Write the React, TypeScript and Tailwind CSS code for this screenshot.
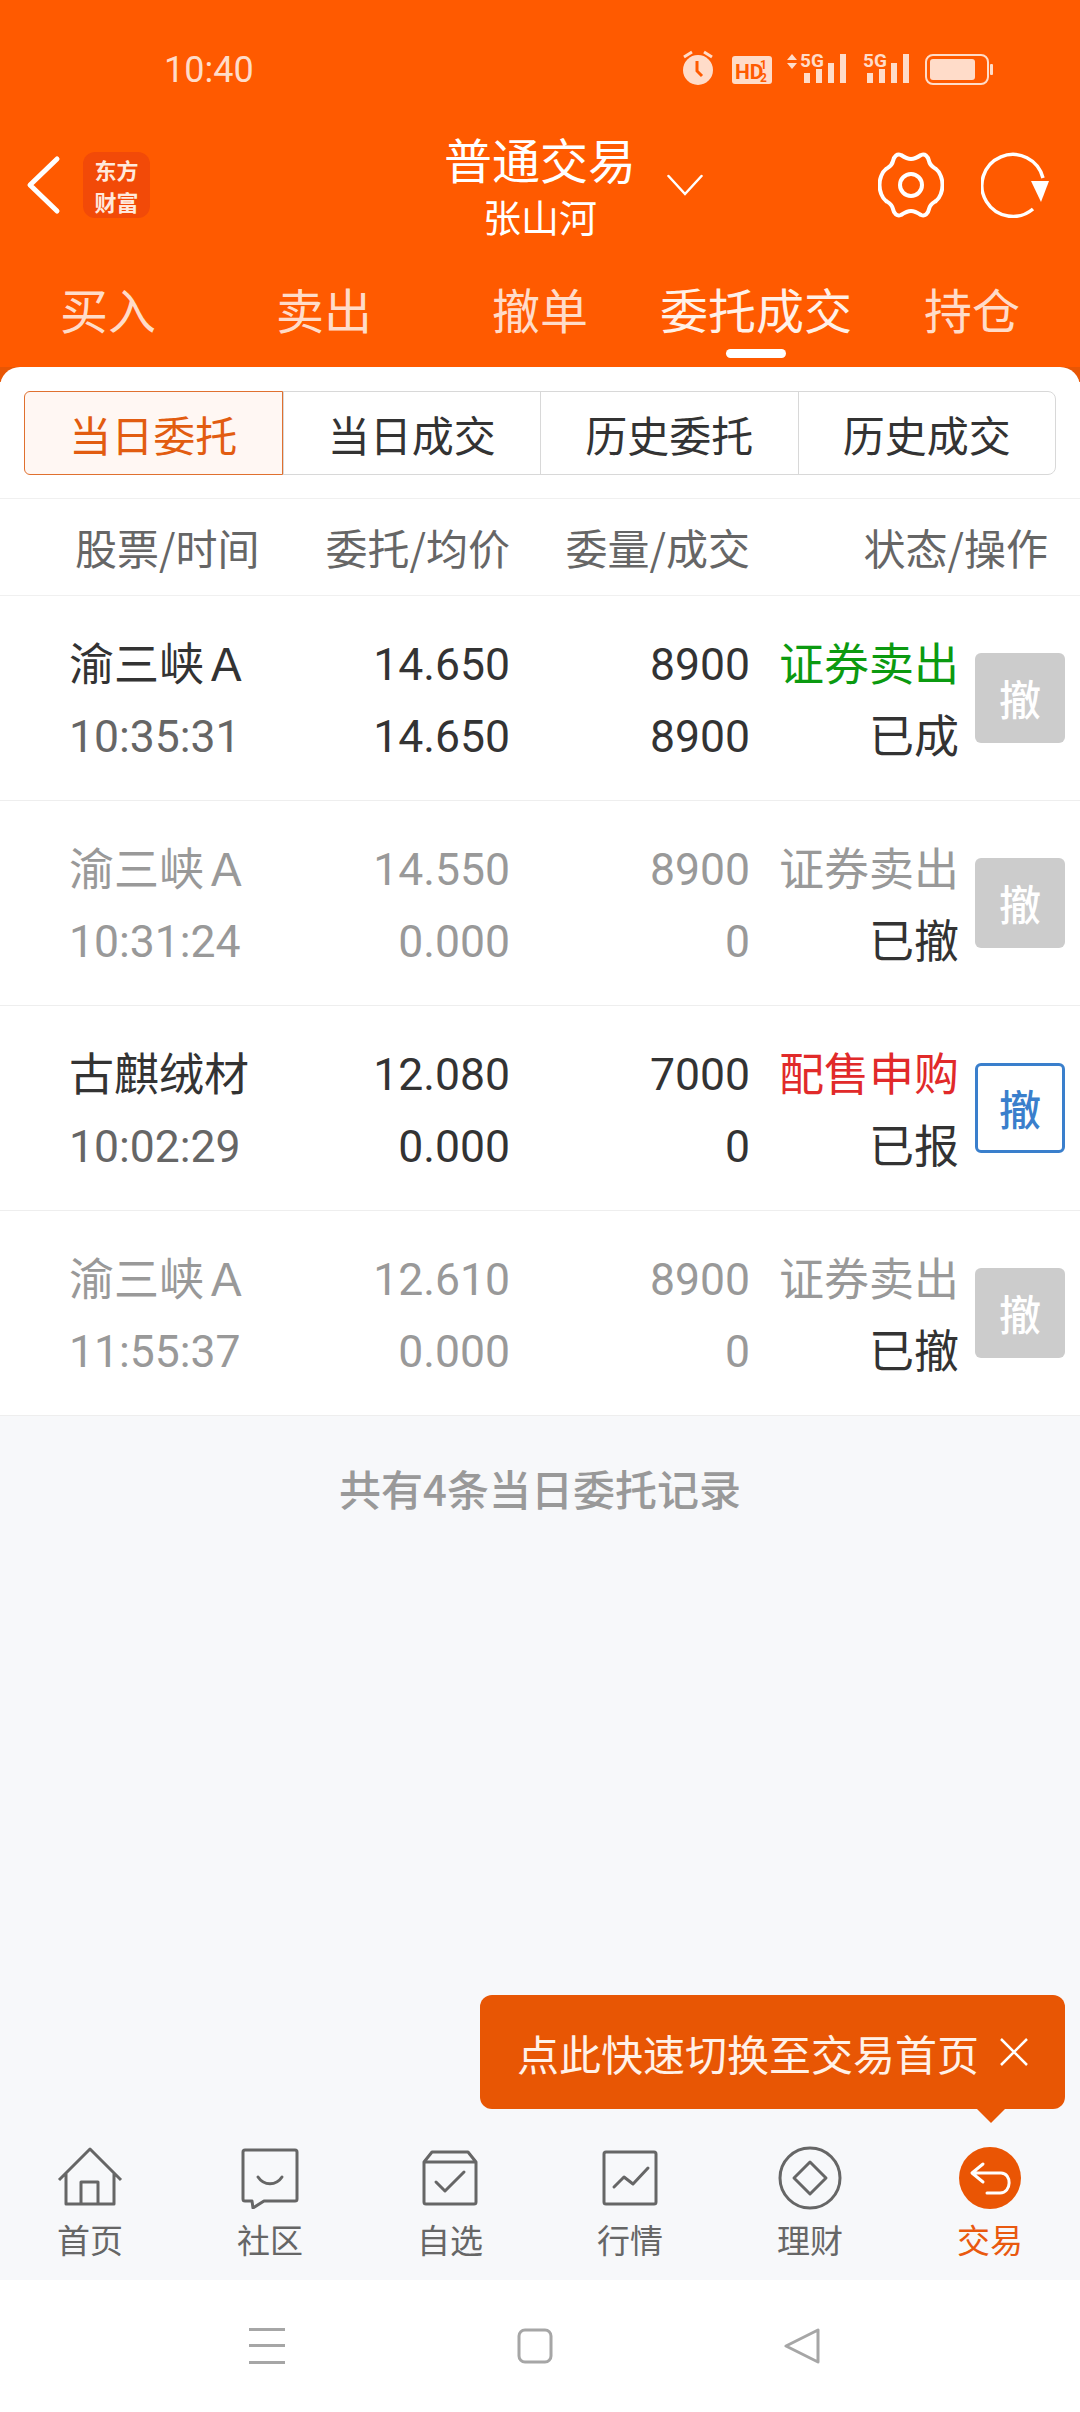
import React from "react";

const cjk = '"Noto Sans CJK SC", "Liberation Sans", sans-serif';
const num = 'Roboto, "Liberation Sans", sans-serif';

type Order = {
  name: string;
  time: string;
  price: string;
  avg: string;
  qty: string;
  done: string;
  kind: string;
  status: string;
  tone: "green" | "gray" | "red";
  active?: boolean;
};

const orders: Order[] = [
  { name: "渝三峡Ａ", time: "10:35:31", price: "14.650", avg: "14.650", qty: "8900", done: "8900", kind: "证券卖出", status: "已成", tone: "green" },
  { name: "渝三峡Ａ", time: "10:31:24", price: "14.550", avg: "0.000", qty: "8900", done: "0", kind: "证券卖出", status: "已撤", tone: "gray" },
  { name: "古麒绒材", time: "10:02:29", price: "12.080", avg: "0.000", qty: "7000", done: "0", kind: "配售申购", status: "已报", tone: "red", active: true },
  { name: "渝三峡Ａ", time: "11:55:37", price: "12.610", avg: "0.000", qty: "8900", done: "0", kind: "证券卖出", status: "已撤", tone: "gray" },
];

const StatusBar = () => (
  <div className="flex h-[126px] items-start pl-[164px] pr-[86px] pt-[48px] text-[#ffdcc9]">
    <span className="text-[36px] leading-[44px]" style={{ fontFamily: num }}>10:40</span>
    <svg className="ml-auto mt-[2px]" width="312" height="40" viewBox="0 0 312 40" fill="currentColor">
      <circle cx="16" cy="20" r="15" />
      <path d="M2 7l8-5M30 7l-8-5" stroke="currentColor" strokeWidth="3" fill="none" />
      <path d="M15 11v10l5 5" stroke="#ff5a00" strokeWidth="3" fill="none" />
      <rect x="50" y="6" width="40" height="28" rx="3" />
      <text x="53" y="29" fontSize="21" fontWeight="700" fill="#ff5a00" fontFamily="Roboto, sans-serif">HD</text>
      <text x="78" y="19" fontSize="12" fontWeight="700" fill="#ff5a00" fontFamily="Roboto, sans-serif">1</text>
      <text x="78" y="32" fontSize="12" fontWeight="700" fill="#ff5a00" fontFamily="Roboto, sans-serif">2</text>
      <path d="M105 10l5-6 5 6zM105 13l5 6 5-6z" />
      <text x="118" y="17" fontSize="19" fontWeight="700" fontFamily="Roboto, sans-serif">5G</text>
      <rect x="122" y="23" width="6" height="10" />
      <rect x="134" y="19" width="6" height="14" />
      <rect x="146" y="13" width="6" height="20" />
      <rect x="158" y="4" width="6" height="29" />
      <text x="181" y="17" fontSize="19" fontWeight="700" fontFamily="Roboto, sans-serif">5G</text>
      <rect x="185" y="23" width="6" height="10" />
      <rect x="197" y="19" width="6" height="14" />
      <rect x="209" y="13" width="6" height="20" />
      <rect x="221" y="4" width="6" height="29" />
      <rect x="244" y="5" width="62" height="29" rx="7" fill="none" stroke="currentColor" strokeWidth="2" />
      <rect x="248" y="9" width="45" height="21" rx="3" />
      <rect x="308" y="14" width="3" height="11" rx="1" />
    </svg>
  </div>
);

const TitleBar = () => (
  <div className="flex h-[118px] items-center">
    <svg className="ml-[24px]" width="38" height="60" viewBox="0 0 38 60" fill="none" stroke="#fff" strokeWidth="5" strokeLinecap="round" strokeLinejoin="round">
      <path d="M33 4L6 30l27 26" />
    </svg>
    <div className="ml-[21px] flex h-[66px] w-[67px] flex-col items-center justify-center rounded-[12px] bg-[#f24a08] text-[22px] font-bold leading-[32px] text-[#ffe9dc]" style={{ fontFamily: cjk }}>
      <span>东方</span>
      <span>财富</span>
    </div>
    <div className="ml-[295px] flex w-[190px] flex-col items-center whitespace-nowrap text-white" style={{ fontFamily: cjk }}>
      <span className="text-[48px] leading-[62px]">普通交易</span>
      <span className="text-[38px] leading-[54px]">张山河</span>
    </div>
    <svg className="ml-[32px]" width="36" height="22" viewBox="0 0 36 22" fill="none" stroke="#fff" strokeWidth="2.5" strokeLinecap="round">
      <path d="M1.5 2l16.5 18L34.5 2" />
    </svg>
    <svg className="ml-[175px]" width="66" height="66" viewBox="0 0 66 66" fill="none" stroke="#fff" strokeWidth="4" strokeLinejoin="round">
      <path d="M33 7C37 7 40 5 43 3C47 1.5 50 4 51 9C52 14 55 15 58 17C62 20 64.5 27 64.5 33C64.5 39 62 46 58 49C55 51 52 52 51 57C50 62 47 64.5 43 63C40 61 37 59 33 59C29 59 26 61 23 63C19 64.5 16 62 15 57C14 52 11 51 8 49C4 46 1.5 39 1.5 33C1.5 27 4 20 8 17C11 15 14 14 15 9C16 4 19 1.5 23 3C26 5 29 7 33 7z" />
      <circle cx="33" cy="33" r="11" />
    </svg>
    <svg className="ml-[37px]" width="70" height="66" viewBox="0 0 70 66" fill="none" stroke="#fff" strokeWidth="3.5">
      <path d="M52 57A31 31 0 1 1 62 26" />
      <path d="M50 29h18l-8 21z" fill="#fff" stroke="none" />
    </svg>
  </div>
);

const topTabs = ["买入", "卖出", "撤单", "委托成交", "持仓"];

const TopTabs = () => (
  <div className="grid h-[123px] grid-cols-5 pt-[33px] text-[48px] leading-[62px] text-[#ffdcc9]" style={{ fontFamily: cjk }}>
    {topTabs.map((tab, i) => (
      <div key={tab} className="flex flex-col items-center">
        <span className={i === 3 ? "text-[#fff1e8]" : ""}>{tab}</span>
        {i === 3 && <span className="mt-[10px] h-[9px] w-[60px] rounded-full bg-white" />}
      </div>
    ))}
  </div>
);

const segments = ["当日委托", "当日成交", "历史委托", "历史成交"];

const SegmentTabs = () => (
  <div className="bg-white px-[24px] pb-[23px] pt-[24px]">
    <div className="grid h-[84px] grid-cols-4 rounded-[8px] border border-[#d8d8d8] text-[42px]" style={{ fontFamily: cjk }}>
      {segments.map((s, i) => (
        <div
          key={s}
          className={
            i === 0
              ? "-my-px -ml-px flex items-center justify-center rounded-l-[6px] border border-[#e0702f] bg-[#fff7f3] text-[#e25c10]"
              : "flex items-center justify-center border-l border-[#d8d8d8] text-[#333333]"
          }
        >
          {s}
        </div>
      ))}
    </div>
  </div>
);

const columns = "grid grid-cols-[300px_210px_240px_1fr]";

const OrderRow = ({ order }: { order: Order }) => {
  const muted = order.tone === "gray";
  const main = muted ? "text-[#999999]" : "text-[#333333]";
  const kindColor = order.tone === "green" ? "text-[#0b9a10]" : order.tone === "red" ? "text-[#e12a2a]" : "text-[#999999]";
  return (
    <div className="relative flex h-[205px] items-center border-b border-[#eeeeee] bg-white text-[45px] leading-[72px]" style={{ fontFamily: num }}>
      <div className="w-[282px] pl-[69px]">
        <div className={main} style={{ fontFamily: cjk }}>{order.name}</div>
        <div className={`h-[72px] text-[44.5px] leading-[78px] ${muted ? "text-[#999999]" : "text-[#666666]"}`}>{order.time}</div>
      </div>
      <div className={`w-[228px] text-right text-[44.5px] leading-[78px] ${main}`}>
        <div className="h-[72px]">{order.price}</div>
        <div className="h-[72px]">{order.avg}</div>
      </div>
      <div className={`w-[240px] text-right text-[44.5px] leading-[78px] ${main}`}>
        <div className="h-[72px]">{order.qty}</div>
        <div className="h-[72px]">{order.done}</div>
      </div>
      <div className="w-[209px] text-right" style={{ fontFamily: cjk }}>
        <div className={kindColor}>{order.kind}</div>
        <div className="text-[#333333]">{order.status}</div>
      </div>
      <div
        className={
          order.active
            ? "ml-[16px] flex h-[90px] w-[90px] items-center justify-center rounded-[6px] border-[3px] border-[#3a7fcc] bg-white text-[42px] font-medium text-[#3a7fcc]"
            : "ml-[16px] flex h-[90px] w-[90px] items-center justify-center rounded-[6px] bg-[#cccccc] text-[42px] font-medium text-white"
        }
        style={{ fontFamily: cjk }}
      >
        撤
      </div>
    </div>
  );
};

const HomeIcon = () => (
  <svg width="66" height="62" viewBox="0 0 66 62" fill="none" stroke="#666" strokeWidth="3" strokeLinejoin="round">
    <path d="M2 33L33 2l31 31M9 26v31h48V26M24 57V35h17v22" />
  </svg>
);
const ChatIcon = () => (
  <svg width="60" height="62" viewBox="0 0 60 62" fill="none" stroke="#666" strokeWidth="3" strokeLinejoin="round" strokeLinecap="round">
    <path d="M5 3h50a2 2 0 0 1 2 2v47a2 2 0 0 1-2 2H24l-11 7-1-7H5a2 2 0 0 1-2-2V5a2 2 0 0 1 2-2z" />
    <path d="M18 30c6 9 18 9 24 0" />
  </svg>
);
const WatchIcon = () => (
  <svg width="56" height="56" viewBox="0 0 56 56" fill="none" stroke="#666" strokeWidth="3" strokeLinejoin="round" strokeLinecap="round">
    <path d="M2 12L10 2h36l8 10v40a2 2 0 0 1-2 2H4a2 2 0 0 1-2-2zM2 12h52" />
    <path d="M14 32l9 9 19-19" />
  </svg>
);
const MarketIcon = () => (
  <svg width="56" height="56" viewBox="0 0 56 56" fill="none" stroke="#666" strokeWidth="3" strokeLinejoin="round" strokeLinecap="round">
    <rect x="2" y="2" width="52" height="52" rx="2" />
    <path d="M12 37l10-10 9 7 15-16" />
  </svg>
);
const FinanceIcon = () => (
  <svg width="64" height="64" viewBox="0 0 64 64" fill="none" stroke="#666" strokeWidth="3" strokeLinejoin="round">
    <circle cx="32" cy="32" r="30" />
    <path d="M32 16l16 16-16 16-16-16z" />
  </svg>
);
const TradeIcon = () => (
  <svg width="62" height="62" viewBox="0 0 62 62" fill="none">
    <circle cx="31" cy="31" r="31" fill="#ea5504" />
    <path d="M24 17l-11 9 11 9M14 26h28c11 0 11 20-1 20H28" stroke="#fff" strokeWidth="3" strokeLinecap="round" strokeLinejoin="round" />
  </svg>
);

const navItems = [
  { label: "首页", icon: <HomeIcon /> },
  { label: "社区", icon: <ChatIcon /> },
  { label: "自选", icon: <WatchIcon /> },
  { label: "行情", icon: <MarketIcon /> },
  { label: "理财", icon: <FinanceIcon /> },
  { label: "交易", icon: <TradeIcon />, active: true },
];

const BottomNav = () => (
  <div className="grid h-[160px] grid-cols-6 bg-[#f7f8fa]" style={{ fontFamily: cjk }}>
    {navItems.map((item) => (
      <div key={item.label} className="flex flex-col items-center pt-[25px]">
        <div className="flex h-[66px] items-center justify-center">{item.icon}</div>
        <span className={`mt-[6px] text-[33px] leading-[44px] ${item.active ? "text-[#e9590f]" : "text-[#666666]"}`}>{item.label}</span>
      </div>
    ))}
  </div>
);

const SystemNav = () => (
  <div className="flex h-[132px] items-center gap-[231px] bg-white pl-[248px]">
    <svg width="38" height="36" viewBox="0 0 38 36" fill="#a6a6a6">
      <rect x="1" y="0" width="36" height="3" />
      <rect x="1" y="16" width="36" height="3" />
      <rect x="1" y="33" width="36" height="3" />
    </svg>
    <svg width="36" height="36" viewBox="0 0 36 36" fill="none" stroke="#a6a6a6" strokeWidth="3">
      <rect x="2" y="2" width="32" height="32" rx="6" />
    </svg>
    <svg width="36" height="36" viewBox="0 0 36 36" fill="none" stroke="#a6a6a6" strokeWidth="3" strokeLinejoin="round">
      <path d="M2 18L34 2v32z" />
    </svg>
  </div>
);

export default function App() {
  return (
    <div className="relative flex h-[2412px] w-[1080px] flex-col overflow-hidden bg-[#f7f8fa]" style={{ fontFamily: cjk }}>
      <div className="bg-[#ff5a00]">
        <StatusBar />
        <TitleBar />
        <TopTabs />
        <div className="h-[15px] bg-[#e85604]" />
      </div>
      <div className="-mt-[15px] overflow-hidden rounded-t-[20px]">
        <SegmentTabs />
        <div className={`${columns} h-[98px] items-center border-y border-[#f0f0f0] bg-white pb-[2px] text-[42px] text-[#666666]`}>
          <span className="pl-[75px]">股票/时间</span>
          <span className="text-right">委托/均价</span>
          <span className="text-right">委量/成交</span>
          <span className="pr-[32px] text-right">状态/操作</span>
        </div>
        {orders.map((order, i) => (
          <OrderRow key={i} order={order} />
        ))}
      </div>
      <div className="flex-1 pt-[44px] text-center text-[42px] font-medium leading-[56px] text-[#999999]">
        共有4条当日委托记录
      </div>
      <BottomNav />
      <SystemNav />
      <div className="absolute left-[480px] top-[1995px] flex h-[114px] w-[585px] items-center rounded-[12px] bg-[#e85604] pl-[37px] text-[42px] text-[#fff1e8]">
        <span>点此快速切换至交易首页</span>
        <svg className="ml-[20px]" width="30" height="30" viewBox="0 0 30 30" stroke="#fff" strokeWidth="2.5">
          <path d="M2 2l26 26M28 2L2 28" />
        </svg>
        <span className="absolute bottom-[-14px] left-[496px] h-0 w-0 border-x-[15px] border-t-[15px] border-x-transparent border-t-[#e85604]" />
      </div>
    </div>
  );
}
